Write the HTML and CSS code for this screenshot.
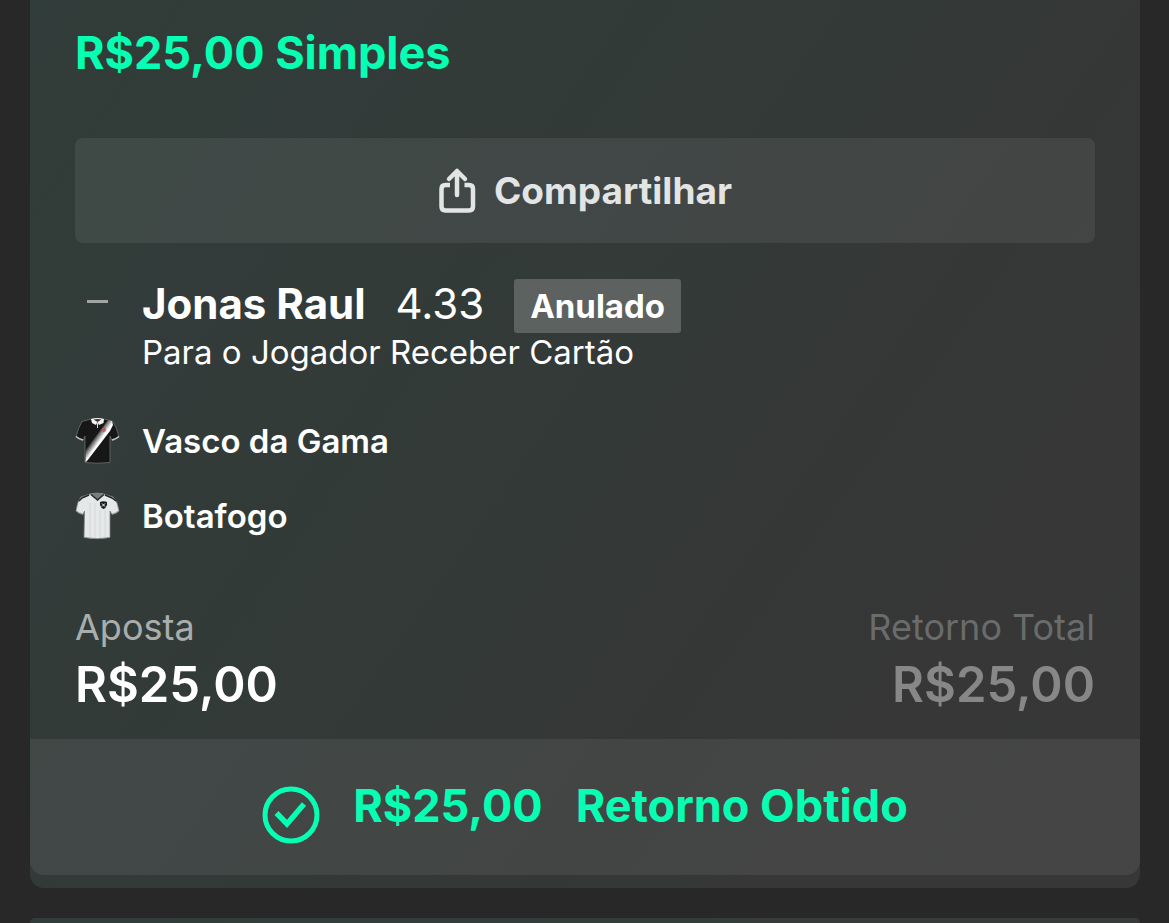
FILE: index.html
```html
<!DOCTYPE html>
<html lang="pt-BR">
<head>
  <meta charset="UTF-8">
  <meta name="viewport" content="width=device-width, initial-scale=1.0">
  <title>Minhas Apostas</title>
  <link rel="stylesheet" href="styles.css">
</head>
<body>
  <main class="bet-card">
    <div class="bet-body">
      <h1 class="bet-title">R$25,00 Simples</h1>

      <button type="button" class="btn-share">
        <svg class="share-icon" width="38" height="48" viewBox="0 0 38 48" fill="none" stroke="currentColor" stroke-width="4.500" aria-hidden="true">
          <path d="M12 18H7.500Q3.500 18 3.500 22V39.500Q3.500 43.500 7.500 43.500H31Q35 43.500 35 39.500V22Q35 18 31 18H26.500"/>
          <path d="M19 4V28M11 12L19 4L27 12" stroke-linecap="round" stroke-linejoin="round"/>
        </svg>
        <span>Compartilhar</span>
      </button>

      <section class="selection">
        <span class="dash"></span>
        <div>
          <div class="selection-top">
            <h2 class="player">Jonas Raul</h2>
            <span class="odds">4.33</span>
            <span class="badge">Anulado</span>
          </div>
          <p class="market">Para o Jogador Receber Cartão</p>
        </div>
      </section>

      <ul class="teams">
        <li class="team">
          <svg class="shirt" width="46" height="50" viewBox="0 0 46 50" aria-hidden="true">
            <defs>
              <linearGradient id="sash" gradientUnits="userSpaceOnUse" x1="18" y1="22" x2="28" y2="29">
                <stop offset="0" stop-color="#171717"/>
                <stop offset="0.500" stop-color="#d8d8d8"/>
                <stop offset="0.600" stop-color="#ffffff"/>
              </linearGradient>
            </defs>
            <path d="M16 3L7 5.500Q3 12 1 21Q4 24 8 24.500L10 20L10 46.500Q22 48 35 46.500L35 20L37 24.500Q41 24 44 21Q42 12 38 5.500L29 3Z" fill="#171717" stroke="#6c706f" stroke-width="0.800"/>
            <path d="M33 4L37 5L38 9L35 15L12 45L10.500 46V34Z" fill="url(#sash)"/>
            <path d="M16 3Q22 1 29 3L28.500 7L24 9L22.500 6L21 9L17 7Z" fill="#f4f4f4"/>
            <path d="M18.500 3.500Q22.500 2.500 26.500 3.500L22.500 6Z" fill="#333333"/>
            <path d="M22.500 7V12" stroke="#dddddd"/>
            <path d="M1 20.500Q4 23 8 24M37 24Q41 23 44 20.500" fill="none" stroke="#c8c8c8" stroke-width="1.500"/>
            <path d="M27 13L30.500 15M30.500 12L28 16" stroke="#c75757" stroke-width="1.500"/>
          </svg>
          <span>Vasco da Gama</span>
        </li>
        <li class="team">
          <svg class="shirt" width="46" height="50" viewBox="0 0 46 50" aria-hidden="true">
            <path d="M15 3L6 6Q2 11 1 20Q4 23 8 23.500L9.500 20L9 46.500Q22 49 35 46.500L35 20L37 23.500Q41 23 44 20Q43 11 38 6L29 3Q22 1 15 3Z" fill="#e5e7e8" stroke="#7b8080" stroke-width="0.800"/>
            <path d="M15 3Q22 1 29 3L26 6L22.500 9L18 6Z" fill="#777d7d"/>
            <path d="M16 3.500L19 6L22.500 9L26 6L29 3.500" fill="none" stroke="#242929" stroke-width="1.500"/>
            <path d="M14 4L7 7L4 10M30 4L37 7L41 10" fill="none" stroke="#242929" stroke-width="1.500"/>
            <path d="M1 19.500Q4 22 8 23M37 23Q41 22 44 19.500" fill="none" stroke="#a5a8a8"/>
            <path d="M15 12V46M20 12V47M25 19V47M30 19V46" stroke="#d4d7d8"/>
            <path d="M25 11Q28.500 9.500 32 11V14Q31 17 28.500 18Q26 17 25 14Z" fill="#191d1d"/>
            <path d="M27 12.500L30 15.500M30 12.500L27 15.500" stroke="#ffffff"/>
          </svg>
          <span>Botafogo</span>
        </li>
      </ul>

      <dl class="totals">
        <div>
          <dt>Aposta</dt>
          <dd>R$25,00</dd>
        </div>
        <div class="total-return">
          <dt>Retorno Total</dt>
          <dd>R$25,00</dd>
        </div>
      </dl>
    </div>

    <footer class="result">
      <svg class="check-icon" width="58" height="58" viewBox="0 0 58 58" fill="none" stroke="currentColor" stroke-width="5" aria-hidden="true">
        <circle cx="29" cy="29" r="26"/>
        <path d="M14.500 27L25 38L42 18" stroke-width="5.500"/>
      </svg>
      <span>R$25,00</span>
      <span>Retorno Obtido</span>
    </footer>
  </main>

  <div class="next-card"></div>
</body>
</html>
```

FILE: styles.css
```css
* {
  box-sizing: border-box;
}
body {
  display: flex;
  flex-direction: column;
  height: 100vh;
  margin: 0;
  padding: 0 29px 0 30px;
  overflow: hidden;
  background-color: #282828;
  color: #ffffff;
  font-family: Inter, "Liberation Sans", sans-serif;
}
h1, h2, p, ul, dl, dd {
  margin: 0;
}
.bet-card {
  flex-shrink: 0;
  padding-bottom: 13px;
  border-radius: 0 0 14px 14px;
  background: linear-gradient(125deg, #313d3a 0%, #333a38 45%, #353736 65%, #373737 90%);
}
.bet-body {
  padding: 25px 45px 24px;
}
.bet-title {
  color: #07ffb3;
  font-size: 45px;
  font-weight: 700;
  line-height: 56px;
}
.btn-share {
  display: flex;
  align-items: center;
  justify-content: center;
  gap: 18px;
  width: 100%;
  height: 105px;
  margin-top: 57px;
  border: none;
  border-radius: 8px;
  background-color: rgba(255, 255, 255, 0.07);
  color: #e3e4e4;
  font-family: inherit;
  font-size: 37px;
  font-weight: 700;
  cursor: pointer;
}
.selection {
  display: flex;
  gap: 34px;
  margin-top: 36px;
}
.dash {
  width: 21px;
  height: 3px;
  margin: 21px 0 0 12px;
  background-color: #a0a5a3;
}
.selection-top {
  display: flex;
  align-items: flex-start;
  gap: 30px;
}
.player {
  font-size: 42px;
  font-weight: 700;
  line-height: 50px;
}
.odds {
  font-size: 42px;
  line-height: 50px;
}
.badge {
  padding: 0 16px;
  border-radius: 3px;
  background-color: #5d6160;
  font-size: 33px;
  font-weight: 700;
  line-height: 54px;
}
.market {
  font-size: 33px;
  line-height: 38px;
}
.teams {
  display: grid;
  gap: 25px;
  margin-top: 45px;
  padding: 0;
  list-style: none;
}
.team {
  display: flex;
  align-items: center;
  gap: 21px;
  height: 50px;
  font-size: 33px;
  font-weight: 600;
}
.totals {
  display: flex;
  justify-content: space-between;
  margin-top: 64px;
}
.totals dt {
  color: #a9adac;
  font-size: 36px;
  line-height: 44px;
}
.totals dd {
  margin-top: 6px;
  font-size: 49px;
  font-weight: 600;
  line-height: 60px;
}
.total-return {
  text-align: right;
}
.total-return dt {
  color: #6a6c6b;
}
.total-return dd {
  color: #878787;
}
.result {
  display: flex;
  justify-content: center;
  gap: 33px;
  height: 136px;
  padding-top: 39px;
  border-radius: 0 0 14px 14px;
  background-color: rgba(255, 255, 255, 0.07);
  color: #07ffb3;
  font-size: 45px;
  font-weight: 700;
  line-height: 56px;
}
.check-icon {
  margin-top: 8px;
}
.next-card {
  flex: 1;
  margin-top: 30px;
  border-radius: 14px 14px 0 0;
  background: linear-gradient(90deg, #313d3a, #373c3b);
}
```
